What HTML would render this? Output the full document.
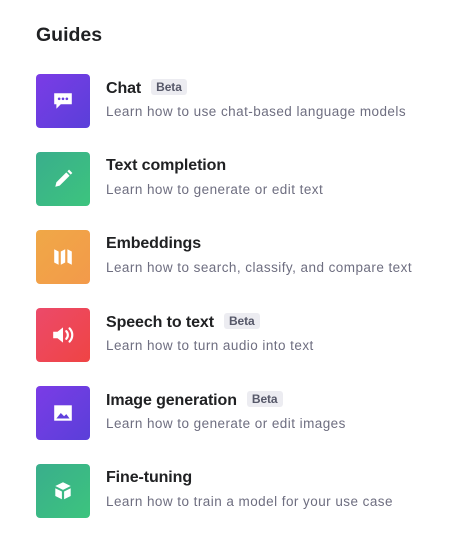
<!DOCTYPE html>
<html><head><style>
body{margin:0;background:#fff;font-family:"Liberation Sans",sans-serif;color:#202123;width:454px;height:551px;overflow:hidden}
h2{position:absolute;left:36px;top:24px;margin:0;font-size:19.5px;font-weight:700;color:#202123}
.row{position:absolute;left:36px;width:410px;height:54px}
.ic{position:absolute;left:0;top:0;width:54px;height:54px;border-radius:4px;display:flex;align-items:center;justify-content:center}
.t{position:absolute;left:70px;top:5px;font-size:16px;font-weight:700;white-space:nowrap;letter-spacing:-0.1px}
.d{position:absolute;left:70px;top:30px;font-size:13.5px;color:#6e6e80;white-space:nowrap;letter-spacing:0.45px}
.b{display:inline-block;margin-left:10px;background:#ececf1;color:#565869;font-size:12px;font-weight:700;padding:1px 5px;border-radius:3px;vertical-align:2px}
</style></head><body>
<h2>Guides</h2>
<div class="row" style="top:74px"><div class="ic" style="background:linear-gradient(135deg,#7b3ce6,#5a3fd9)"><svg width="22" height="22" viewBox="0 0 20 20"><path d="M2 3h16v10H8l-4 4v-4H2z" fill="#fff"/><circle cx="6.5" cy="8" r="1.2" fill="#6a3ee0"/><circle cx="10" cy="8" r="1.2" fill="#6a3ee0"/><circle cx="13.5" cy="8" r="1.2" fill="#6a3ee0"/></svg></div><div class="t">Chat<span class="b">Beta</span></div><div class="d">Learn how to use chat-based language models</div></div>
<div class="row" style="top:152px"><div class="ic" style="background:linear-gradient(135deg,#3aae8c,#3cc47e)"><svg width="22" height="22" viewBox="0 0 20 20"><path d="M3 17l1-4 9-9 3 3-9 9z" fill="#fff"/><path d="M14 3l1.5-1.5 3 3L17 6z" fill="#fff"/></svg></div><div class="t">Text completion</div><div class="d">Learn how to generate or edit text</div></div>
<div class="row" style="top:230px"><div class="ic" style="background:linear-gradient(135deg,#f0a847,#f39a4a)"><svg width="22" height="22" viewBox="0 0 20 20"><path d="M2 3l4 2v12l-4-2zM8 5l4-2v12l-4 2zM14 3l4 2v12l-4-2z" fill="#fff"/></svg></div><div class="t">Embeddings</div><div class="d">Learn how to search, classify, and compare text</div></div>
<div class="row" style="top:308px"><div class="ic" style="background:linear-gradient(135deg,#ec4a6a,#ef4444)"><svg width="24" height="22" viewBox="0 0 22 20"><path d="M2 7h4l5-4v14l-5-4H2z" fill="#fff"/><path d="M14 6.5a5 5 0 010 7M17 4a8.5 8.5 0 010 12" stroke="#fff" stroke-width="2" fill="none" stroke-linecap="round"/></svg></div><div class="t">Speech to text<span class="b">Beta</span></div><div class="d">Learn how to turn audio into text</div></div>
<div class="row" style="top:386px"><div class="ic" style="background:linear-gradient(135deg,#7b3ce6,#5a3fd9)"><svg width="22" height="22" viewBox="0 0 20 20"><rect x="2" y="3" width="16" height="14" fill="#fff"/><path d="M4 15l4-5 3 3 2-2 3 4z" fill="#6040dc"/></svg></div><div class="t">Image generation<span class="b">Beta</span></div><div class="d">Learn how to generate or edit images</div></div>
<div class="row" style="top:464px"><div class="ic" style="background:linear-gradient(135deg,#3aae8c,#3cc47e)"><svg width="22" height="22" viewBox="0 0 20 20"><path d="M10 2l7 3.5-7 3.5-7-3.5z" fill="#fff"/><path d="M3 7.5l6 3v7l-6-3zM17 7.5l-6 3v7l6-3z" fill="#fff"/></svg></div><div class="t">Fine-tuning</div><div class="d">Learn how to train a model for your use case</div></div>
</body></html>
